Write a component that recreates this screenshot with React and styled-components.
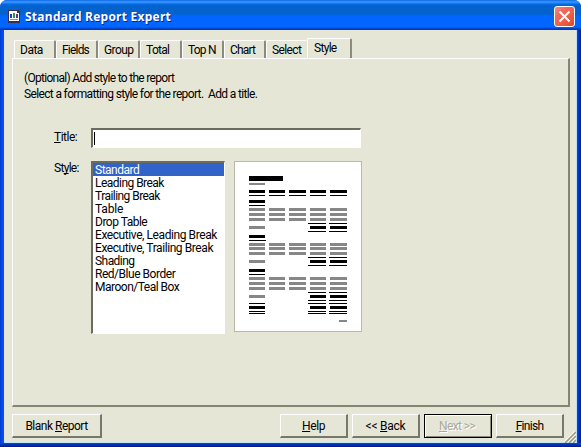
import React from "react";
import styled, { createGlobalStyle, css } from "styled-components";

const Global = createGlobalStyle`
  * { box-sizing: border-box; }
  body { margin: 0; background: #fff; overflow: hidden; }
  button, input { font: inherit; color: inherit; border-radius: 0; margin: 0; padding: 0; }
`;

const face = "#e6e6d6";

const Window = styled.div`
  width: 581px;
  height: 447px;
  display: flex;
  flex-direction: column;
  background: linear-gradient(90deg, #0036c8 0, #0050ee 2px, #0058f0 577px, #0038c8 578px, #001c98 581px);
  border-radius: 7px 7px 0 0;
  overflow: hidden;
  font: 12px/13px Roboto, "Liberation Sans", sans-serif;
  color: #000;
`;

const TitleBar = styled.header`
  height: 30px;
  flex: none;
  display: flex;
  align-items: center;
  padding: 2px 6px 0 8px;
  background: linear-gradient(#0754d8 0, #2b92ff 1px, #2b8cff 3px, #0568e0 4px, #0462cc 6px, #0462cc 14px, #0066ff 16px, #0066ff 27px, #0038c0 29px, #0038c0 30px);
`;

const Caption = styled.h1`
  flex: 1;
  margin: 1px 0 0 5px;
  font: bold 12px/16px "Open Sans", "Noto Sans", sans-serif;
  letter-spacing: ${(p) => p.$track}px;
  color: #fff;
  text-shadow: 1px 1px 0 #0a2a88;
  white-space: nowrap;
`;

const Close = styled.button`
  width: 21px;
  height: 21px;
  margin-top: 1px;
  display: grid;
  place-items: center;
  border: 1px solid #fff;
  border-radius: 3px;
  background: linear-gradient(135deg, #f09080 0, #f06860 30%, #f06048 60%, #d84828 100%);
`;

const Client = styled.main`
  height: 413px;
  margin: 0 4px 0 4px;
  display: flex;
  flex-direction: column;
  background: ${face};
  border-right: 1px solid #b8ddf4;
  border-bottom: 1px solid #c8e8f4;
  padding: 8px 6px 0 8px;
`;

const BottomFrame = styled.div`
  flex: 1;
  background: linear-gradient(#0048e0, #0030b0 50%, #001888);
`;

const Tabs = styled.nav`
  height: 20px;
  flex: none;
  display: flex;
  align-items: flex-end;
  padding-left: 2px;
`;

const Tab = styled.div`
  width: 42px;
  height: 18px;
  padding: 3px 0 0 5px;
  border-top: 1px solid #fff;
  border-left: 1px solid #fff;
  border-right: 2px solid #8b8a7c;
  border-radius: 2px 2px 0 0;
  letter-spacing: ${(p) => p.$track || 0}px;
  white-space: nowrap;
  ${(p) =>
    p.$beforeActive &&
    css`
      width: 41px;
      border-right: 0;
    `}
  ${(p) =>
    p.$active &&
    css`
      width: 45px;
      height: 21px;
      margin-bottom: -1px;
      padding-left: 6px;
      background: ${face};
    `}
`;

const Page = styled.section`
  height: 349px;
  flex: none;
  border: 1px solid #fff;
  border-right: 2px solid #858475;
  border-bottom: 2px solid #858475;
  padding: 13px 0 0 11px;
`;

const Line = styled.p`
  margin: 0 0 3px;
  letter-spacing: ${(p) => p.$track}px;
  white-space: pre;
`;

const Form = styled.div`
  display: grid;
  grid-template-columns: 37px 134px 128px;
  grid-template-rows: 20px 173px;
  row-gap: 13px;
  margin: 27px 0 0 30px;
`;

const FieldLabel = styled.label`
  letter-spacing: ${(p) => p.$track}px;
  padding-top: ${(p) => p.$top}px;
  white-space: nowrap;
`;

const Key = styled.span`
  text-decoration: underline;
  text-decoration-thickness: 1px;
  text-underline-offset: 1px;
  text-decoration-skip-ink: none;
`;

const sunken = css`
  background: #fff;
  border: 1px solid #fff;
  border-top: 2px solid #6c6b60;
  border-left: 2px solid #6c6b60;
`;

const TextBox = styled.div`
  ${sunken}
  width: 270px;
  height: 20px;
  grid-column: 2 / 4;
  padding: 2px 0 0 1px;
`;

const Caret = styled.div`
  width: 1px;
  height: 13px;
  background: #000;
`;

const List = styled.ul`
  ${sunken}
  width: 134px;
  height: 173px;
  margin: 0;
  padding: 0;
  list-style: none;
`;

const Item = styled.li`
  height: 13px;
  line-height: 14px;
  padding-left: 2px;
  letter-spacing: ${(p) => p.$track}px;
  white-space: nowrap;
  ${(p) =>
    p.$selected &&
    css`
      background: #3163c8;
      color: #fff;
    `}
`;

const Preview = styled.svg`
  width: 128px;
  height: 171px;
  margin-left: 9px;
  background: #fff;
  box-shadow: inset 0 0 0 1px #b9b9b0;
`;

const Footer = styled.footer`
  height: 35px;
  display: flex;
  align-items: flex-start;
  gap: 4px;
  padding-top: 7px;
  position: relative;
`;

const PushButton = styled.button`
  width: ${(p) => p.$width || 68}px;
  height: 24px;
  padding: 1px 0 0;
  background: ${face};
  border: 1px solid #fff;
  border-right: 2px solid #77766b;
  border-bottom: 2px solid #77766b;
  letter-spacing: ${(p) => p.$track || 0}px;
  white-space: nowrap;
  margin-right: ${(p) => (p.$first ? 174 : 0)}px;
  ${(p) =>
    p.$muted &&
    css`
      color: #aaa99b;
      text-shadow: 1px 1px 0 #fff;
      border: 1px solid #000;
      padding-right: 2px;
      box-shadow: inset 1px 1px 0 #fff, inset -1px -1px 0 #8a897c;
    `}
`;

const Grip = styled.svg`
  position: absolute;
  right: -6px;
  bottom: -1px;
`;

const tabs = [
  ["Data", -0.5],
  ["Fields", -0.8],
  ["Group", -0.6],
  ["Total", -0.7],
  ["Top N", -0.8],
  ["Chart", -0.8],
  ["Select", -0.6],
  ["Style", -0.7],
];

const styles = [
  ["Standard", -0.5],
  ["Leading Break", -0.53],
  ["Trailing Break", -0.55],
  ["Table", -0.2],
  ["Drop Table", -0.5],
  ["Executive, Leading Break", -0.42],
  ["Executive, Trailing Break", -0.42],
  ["Shading", -0.55],
  ["Red/Blue Border", -0.47],
  ["Maroon/Teal Box", -0.5],
];

const first = [15, 16];
const columns = [first, [35, 16], [55, 17], [76, 16], [96, 17]];
const totals = columns.slice(3);
const rules = [[74, 18], [95, 18]];
const ink = "#000";
const gray = "#878787";

// Each band: top, height, colour, [left, width] segments
const bands = [
  [15, 5, ink, [[15, 34]]],
  [22, 2, gray, [first]],
  [29, 3, ink, columns],
  [34, 1, ink, columns],
  [39, 3, ink, [first]],
  [44, 1, ink, [first]],
  ...[47, 52, 57].map((y) => [y, 3, gray, columns]),
  [62, 1, ink, rules],
  [65, 3, gray, [first]],
  [65, 3, ink, totals],
  [70, 1, ink, rules],
  [74, 3, ink, [first]],
  [79, 1, ink, [[15, 17]]],
  ...[82, 86, 91].map((y) => [y, 3, gray, columns]),
  [96, 1, ink, rules],
  [99, 3, gray, [first]],
  [99, 3, ink, totals],
  [104, 1, ink, rules],
  [108, 3, ink, [first]],
  [113, 1, ink, [first]],
  ...[116, 121, 126].map((y) => [y, 3, gray, columns]),
  [131, 1, ink, rules],
  [134, 3, gray, [first]],
  [134, 3, ink, totals],
  [139, 1, ink, rules],
  [142, 1, ink, [first, ...rules]],
  [145, 3, ink, [first, ...totals]],
  [150, 1, ink, [first, ...rules]],
  [152, 1, ink, [first, ...rules]],
  [159, 2, gray, [[105, 8]]],
];

function ReportPreview() {
  return (
    <Preview viewBox="0 0 128 171" shapeRendering="crispEdges">
      {bands.map(([y, h, fill, parts], i) =>
        parts.map(([x, w]) => <rect key={`${i}-${x}`} x={x} y={y} width={w} height={h} fill={fill} />)
      )}
    </Preview>
  );
}

function AppIcon() {
  return (
    <svg width="12" height="13" viewBox="0 0 12 13" shapeRendering="crispEdges">
      <path d="M0 0h10l2 2v11H0z" fill="#38304c" />
      <path d="M1 1h8v2h2v8H1z" fill="#fff" />
      <path d="M2 4h2v4H2z" fill="#173fae" />
      <path d="M5 3h2v5H5z" fill="#22965c" />
      <path d="M8 4h2v4H8z" fill="#713078" />
      <path d="M2 9h8v1H2z" fill="#999" />
    </svg>
  );
}

export default function App() {
  return (
    <>
      <Global />
      <Window>
        <TitleBar>
          <AppIcon />
          <Caption $track={0.24}>Standard Report Expert</Caption>
          <Close aria-label="Close">
            <svg width="13" height="13" viewBox="0 0 13 13">
              <path d="M1.5 1.5l10 10M11.5 1.5l-10 10" stroke="#fff" strokeWidth="2" />
            </svg>
          </Close>
        </TitleBar>
        <Client>
          <Tabs>
            {tabs.map(([name, track], i) => (
              <Tab key={name} $track={track} $active={i === 7} $beforeActive={i === 6}>
                {name}
              </Tab>
            ))}
          </Tabs>
          <Page>
            <Line $track={-0.7}>(Optional) Add style to the report</Line>
            <Line $track={-0.65}>{"Select a formatting style for the report.  Add a title."}</Line>
            <Form>
              <FieldLabel $track={-0.5} $top={3}>
                <Key>T</Key>itle:
              </FieldLabel>
              <TextBox>
                <Caret />
              </TextBox>
              <FieldLabel $track={-0.7} $top={1}>
                St<Key>y</Key>le:
              </FieldLabel>
              <List>
                {styles.map(([name, track], i) => (
                  <Item key={name} $track={track} $selected={i === 0}>
                    {name}
                  </Item>
                ))}
              </List>
              <ReportPreview />
            </Form>
          </Page>
          <Footer>
            <PushButton $width={90} $track={-0.5} $first>
              Blank <Key>R</Key>eport
            </PushButton>
            <PushButton $track={-0.4}>
              <Key>H</Key>elp
            </PushButton>
            <PushButton $track={-0.25}>
              &lt;&lt; <Key>B</Key>ack
            </PushButton>
            <PushButton $track={-0.6} $muted>
              <Key>N</Key>ext &gt;&gt;
            </PushButton>
            <PushButton $track={-0.7}>
              <Key>F</Key>inish
            </PushButton>
            <Grip width="12" height="12" viewBox="0 0 12 12">
              <path d="M1 12L12 1M5 12l7-7M9 12l3-3" stroke="#98978a" strokeWidth="1.5" />
              <path d="M0 11L11 0M4 11l8-8M8 11l4-4" stroke="#fff" strokeWidth=".8" />
            </Grip>
          </Footer>
        </Client>
        <BottomFrame />
      </Window>
    </>
  );
}
